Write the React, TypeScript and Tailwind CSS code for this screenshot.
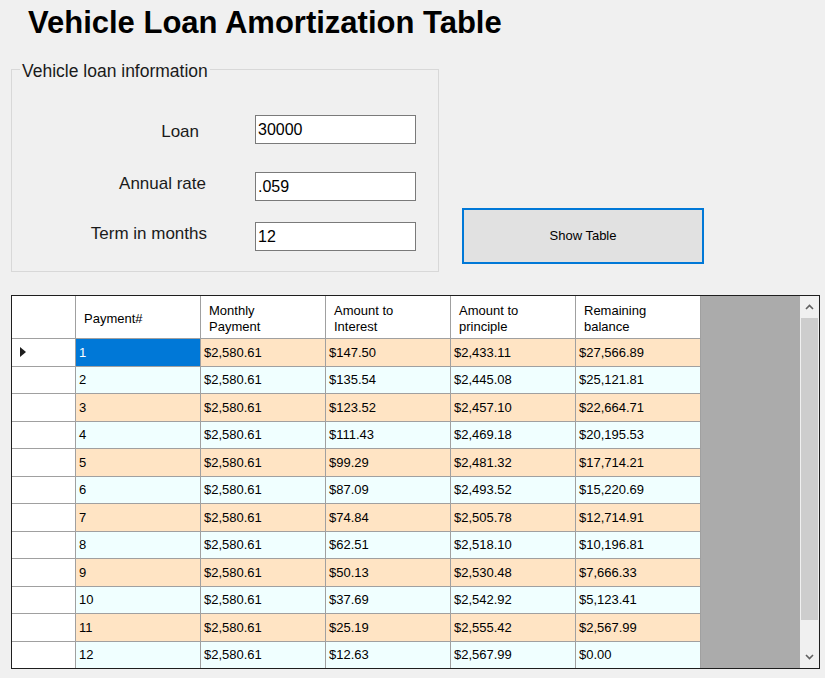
import React from 'react';

const headers = ['Payment#', 'Monthly\nPayment', 'Amount to\nInterest', 'Amount to\nprinciple', 'Remaining\nbalance'];

const rows = [
  ['1', '$2,580.61', '$147.50', '$2,433.11', '$27,566.89'],
  ['2', '$2,580.61', '$135.54', '$2,445.08', '$25,121.81'],
  ['3', '$2,580.61', '$123.52', '$2,457.10', '$22,664.71'],
  ['4', '$2,580.61', '$111.43', '$2,469.18', '$20,195.53'],
  ['5', '$2,580.61', '$99.29', '$2,481.32', '$17,714.21'],
  ['6', '$2,580.61', '$87.09', '$2,493.52', '$15,220.69'],
  ['7', '$2,580.61', '$74.84', '$2,505.78', '$12,714.91'],
  ['8', '$2,580.61', '$62.51', '$2,518.10', '$10,196.81'],
  ['9', '$2,580.61', '$50.13', '$2,530.48', '$7,666.33'],
  ['10', '$2,580.61', '$37.69', '$2,542.92', '$5,123.41'],
  ['11', '$2,580.61', '$25.19', '$2,555.42', '$2,567.99'],
  ['12', '$2,580.61', '$12.63', '$2,567.99', '$0.00'],
];

const fields = [
  { label: 'Loan', value: '30000', labelPad: 'pr-[56px] pt-[4px]', gap: 'mt-[34px]' },
  { label: 'Annual rate', value: '.059', labelPad: 'pr-[49px] pb-[5px]', gap: 'mt-[28px]' },
  { label: 'Term in months', value: '12', labelPad: 'pr-[48px] pb-[5px]', gap: 'mt-[21px]' },
];

const LoanForm: React.FC = () => (
  <fieldset className="ml-[11px] w-[428px] border border-[#d8d8d8] pb-[20px]">
    <legend className="ml-[8px] px-[2px] pt-[3px] text-[17.5px] leading-[20px] text-[#1a1a1a]">
      Vehicle loan information
    </legend>
    {fields.map(f => (
      <div key={f.label} className={`flex items-center ${f.gap}`}>
        <span className={`w-[243px] text-right text-[17px] leading-[20px] text-[#1a1a1a] ${f.labelPad}`}>
          {f.label}
        </span>
        <input
          readOnly
          value={f.value}
          className="w-[161px] h-[29px] border border-[#7a7a7a] bg-white px-[2px] text-[16px] text-black outline-none"
        />
      </div>
    ))}
  </fieldset>
);

const AmortizationGrid: React.FC = () => (
  <div className="ml-[11px] mt-[23px] w-[809px] h-[374px] border border-[#1e1e1e] flex overflow-hidden text-[13px] text-black">
    <div className="flex flex-col w-[689px]">
      <div className="flex h-[43px] bg-white border-b border-[#a0a0a0] shrink-0">
        <div className="w-[64px] border-r border-[#a0a0a0]" />
        {headers.map(h => (
          <div
            key={h}
            className="w-[125px] border-r border-[#a0a0a0] flex items-center pl-[8px] pt-[3px] leading-[16px] whitespace-pre-line"
          >
            {h}
          </div>
        ))}
      </div>
      {rows.map((r, i) => (
        <div
          key={r[0]}
          className={`flex h-[27.5px] shrink-0 ${i % 2 === 0 ? 'bg-[#ffe4c4]' : 'bg-[#f0ffff]'}`}
        >
          <div className="w-[64px] bg-white border-r border-b border-[#a0a0a0] flex items-center pl-[8px]">
            {i === 0 && (
              <svg width="6" height="10" viewBox="0 0 6 10">
                <polygon points="0,0 6,5 0,10" fill="#1e1e1e" />
              </svg>
            )}
          </div>
          {r.map((c, j) => (
            <div
              key={j}
              className={`w-[125px] border-r border-b border-[#a0a0a0] flex items-center pl-[3px] ${
                i === 0 && j === 0 ? 'bg-[#0078d7] text-white' : ''
              }`}
            >
              {c}
            </div>
          ))}
        </div>
      ))}
    </div>
    <div className="flex-1 bg-[#ababab]" />
    <div className="w-[19px] bg-[#f0f0f0] flex flex-col">
      <div className="h-[22px] flex items-center justify-center">
        <svg width="9" height="6" viewBox="0 0 9 6">
          <path d="M1 5 L4.5 1.5 L8 5" stroke="#606060" strokeWidth="1.6" fill="none" />
        </svg>
      </div>
      <div className="mx-[1px] h-[302px] bg-[#cdcdcd]" />
      <div className="flex-1" />
      <div className="h-[22px] flex items-center justify-center">
        <svg width="9" height="6" viewBox="0 0 9 6">
          <path d="M1 1 L4.5 4.5 L8 1" stroke="#606060" strokeWidth="1.6" fill="none" />
        </svg>
      </div>
    </div>
  </div>
);

export default function App() {
  return (
    <div
      className="w-[825px] h-[678px] bg-[#f0f0f0] overflow-hidden"
      style={{ fontFamily: '"Liberation Sans", Arial, sans-serif' }}
    >
      <h1 className="pl-[28px] pt-[6px] text-[31px] leading-[34px] font-bold text-black">
        Vehicle Loan Amortization Table
      </h1>
      <div className="mt-[18px] flex items-start">
        <LoanForm />
        <button className="ml-[23px] mt-[150px] w-[242px] h-[56px] border-2 border-[#0078d7] bg-[#e1e1e1] text-[13px] text-black">
          Show Table
        </button>
      </div>
      <AmortizationGrid />
    </div>
  );
}
